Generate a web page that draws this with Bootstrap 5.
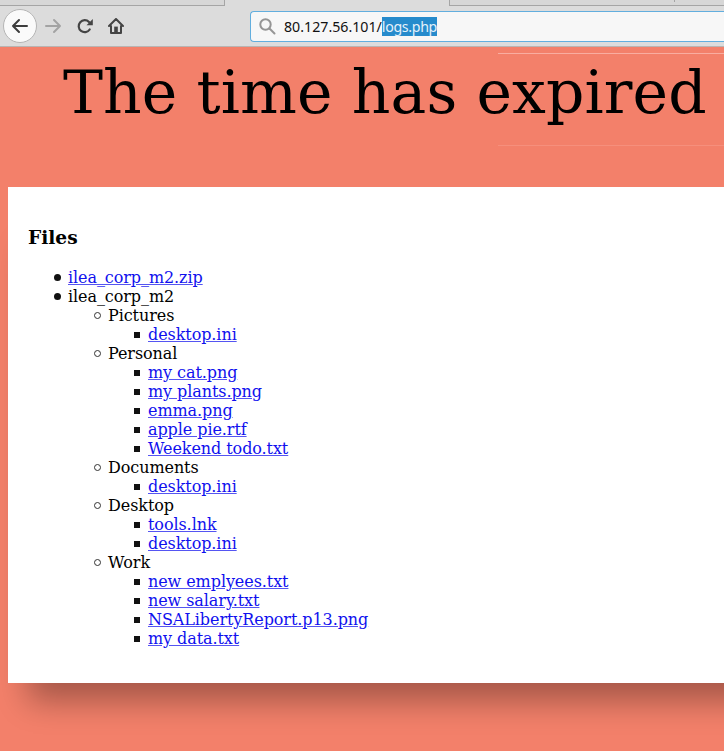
<!DOCTYPE html>
<html lang="en">
<head>
<meta charset="utf-8">
<meta name="viewport" content="width=device-width, initial-scale=1">
<title>Files</title>
<link rel="stylesheet" href="https://cdn.jsdelivr.net/npm/bootstrap@5.3.0/dist/css/bootstrap.min.css">
<style>
body{height:751px;background:#f3806a;color:#000;font-family:"DejaVu Serif",serif;font-size:16px;line-height:19px}
.chrome{height:47px;background:#dcdcdc;border-bottom:1px solid #b9b4b2}
.tabs{height:6px}
.tab-a{width:225px;background:#d7d7d7;border:solid #a5a5a5;border-width:0 1px 1px 0}
.tab-b{width:275px;background:#d7d7d7;border:solid #a5a5a5;border-width:0 0 1px 1px}
.tab-tick{width:1px;height:2px;margin-left:224px;background:#a5a5a5}
.tools{height:40px}
.back{width:34px;height:34px;margin-left:3px;background:#fafafa;border:1px solid #b5b5b5}
.forward{margin-left:8px}
.reload,.home{margin-left:15px}
.address{width:474px;height:31px;border:solid #62aede;border-width:1.5px 0 1.5px 1.5px;border-radius:4px 0 0 4px;background:#f7f7f7;font:14.2px/19px "Noto Sans",sans-serif;color:#111}
.url{margin-left:8px}
.picked{display:inline-block;background:#268bcc;color:#e4f1fa;letter-spacing:-.33px}
.banner{height:140px}
.banner h1{font-size:60px;line-height:70px;letter-spacing:.09px;margin:0;padding:10px 0 0 63px}
.rule{width:226px;height:1px;background:#f9ada0}
.rule-top{top:6px}
.rule-low{top:98px;background:#f68f7c}
.sheet{width:800px;height:496px;margin-left:8px;padding:41px 20px 0;box-shadow:0 38px 30px -20px rgba(0,0,0,.32)}
.sheet h3{font-size:18.6px;line-height:20px;margin-bottom:20px}
.sheet ul{padding-left:40px;margin:0;list-style:none;letter-spacing:-.08px}
.sheet li::before{content:"";display:inline-block;width:7px;height:7px;margin:0 7.5px 2px -14.5px;border-radius:50%;background:#111}
.sheet ul ul li::before{background:none;border:1px solid #333}
.sheet ul ul ul li::before{width:6px;height:6px;margin:0 8px 2px -14px;border:0;border-radius:0;background:#111}
.sheet a{color:#1010ee;text-decoration-color:#5555f2}
</style>
</head>
<body class="overflow-hidden">
<header class="chrome overflow-hidden">
  <div class="tabs d-flex justify-content-between"><div class="tab-a"></div><div class="tab-b"><div class="tab-tick"></div></div></div>
  <nav class="tools d-flex align-items-center">
    <div class="back rounded-circle d-flex align-items-center justify-content-center">
      <svg width="18" height="16" viewBox="0 0 18 16" fill="none" stroke="#3d3d3d" stroke-width="2" stroke-linecap="round" stroke-linejoin="round"><path d="M16 8H2M8 2 2 8l6 6"/></svg>
    </div>
    <svg class="forward" width="17" height="16" viewBox="0 0 17 16" fill="none" stroke="#a3a3a3" stroke-width="2" stroke-linecap="round" stroke-linejoin="round"><path d="M1 8h14M9 2l6 6-6 6"/></svg>
    <svg class="reload" width="16" height="16" viewBox="0 0 16 16"><path d="M12.7 11.5A6 6 0 1 1 12 4" fill="none" stroke="#444" stroke-width="2.2" stroke-linecap="round"/><path d="M15.8 1v6.3H9.5z" fill="#444"/></svg>
    <svg class="home" width="16" height="16" viewBox="0 0 16 16" fill="none" stroke="#444" stroke-width="2" stroke-linecap="round" stroke-linejoin="round"><path d="M1 8 8 1l7 7M3 8v7h10V8"/><path d="M6.2 14V8.6h3.6V14z" fill="#444" stroke="none"/></svg>
    <div class="address ms-auto d-flex align-items-center">
      <svg class="ms-2" width="17" height="17" viewBox="0 0 17 17" fill="none" stroke="#959595" stroke-width="2" stroke-linecap="round"><circle cx="6.5" cy="6.5" r="5.2"/><path d="m10.5 10.5 5 5"/></svg>
      <span class="url text-nowrap">80.127.56.101/<span class="picked">logs.php</span></span>
    </div>
  </nav>
</header>
<section class="banner position-relative">
  <div class="rule rule-top position-absolute end-0"></div>
  <h1 class="fw-normal text-nowrap">The time has expired</h1>
  <div class="rule rule-low position-absolute end-0"></div>
</section>
<main class="sheet bg-white">
  <h3 class="fw-bold">Files</h3>
  <ul>
    <li><a href="#">ilea_corp_m2.zip</a></li>
    <li>ilea_corp_m2
      <ul>
        <li>Pictures<ul><li><a href="#">desktop.ini</a></li></ul></li>
        <li>Personal<ul>
          <li><a href="#">my cat.png</a></li>
          <li><a href="#">my plants.png</a></li>
          <li><a href="#">emma.png</a></li>
          <li><a href="#">apple pie.rtf</a></li>
          <li><a href="#">Weekend todo.txt</a></li>
        </ul></li>
        <li>Documents<ul><li><a href="#">desktop.ini</a></li></ul></li>
        <li>Desktop<ul>
          <li><a href="#">tools.lnk</a></li>
          <li><a href="#">desktop.ini</a></li>
        </ul></li>
        <li>Work<ul>
          <li><a href="#">new emplyees.txt</a></li>
          <li><a href="#">new salary.txt</a></li>
          <li><a href="#">NSALibertyReport.p13.png</a></li>
          <li><a href="#">my data.txt</a></li>
        </ul></li>
      </ul>
    </li>
  </ul>
</main>
<script src="https://cdn.jsdelivr.net/npm/bootstrap@5.3.0/dist/js/bootstrap.bundle.min.js"></script>
</body>
</html>
